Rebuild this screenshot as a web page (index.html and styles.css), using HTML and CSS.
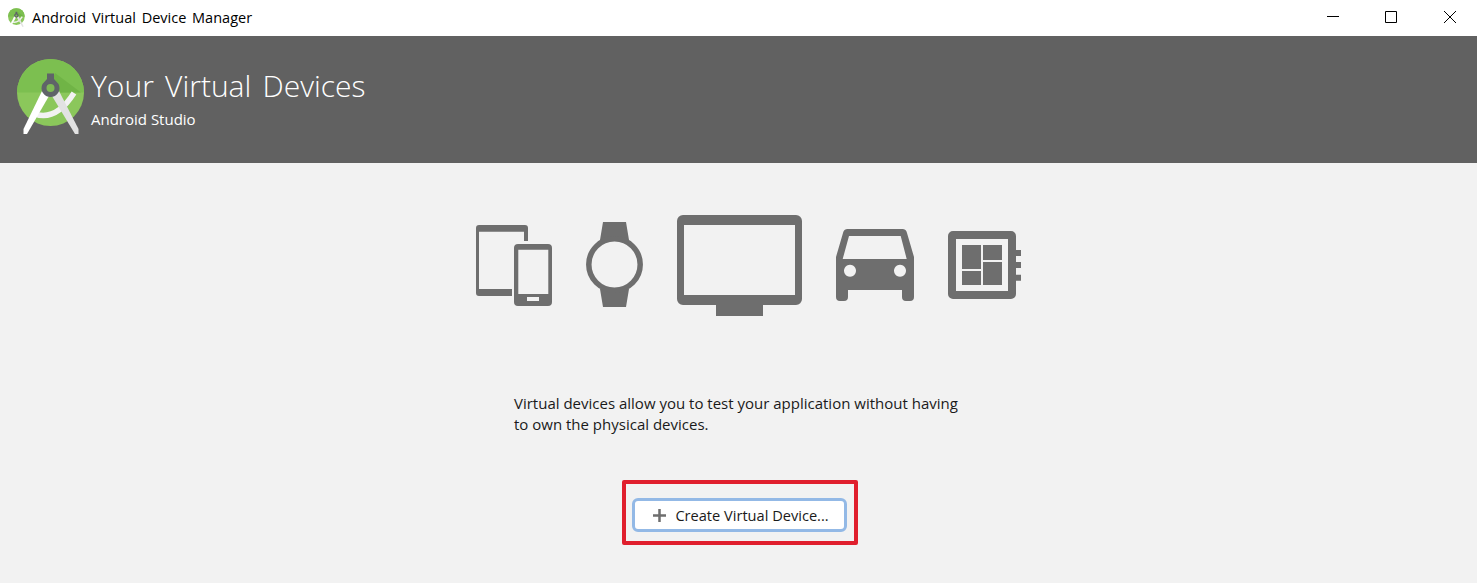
FILE: index.html
```html
<!DOCTYPE html>
<html lang="en">
<head>
    <meta charset="UTF-8">
    <title>Android Virtual Device Manager</title>
    <link rel="stylesheet" href="styles.css">
</head>
<body>
    <svg class="defs" width="0" height="0">
        <symbol id="studioLogo" viewBox="0 0 68 75">
            <circle cx="33.5" cy="33.5" r="33.5" fill="#8bc75b"/>
            <path d="M0 33.5a33.5 33.5 0 0 1 67 0z" fill="#7cbf50"/>
            <path d="M38 14 64 33.500H30z" fill="#70b446"/>
            <path d="M15 54Q38 64 57 34" fill="none" stroke="#f2f2f2" stroke-width="5.500"/>
            <path d="M25 32 32 37 10 75 6.500 75 6.500 70z" fill="#fff"/>
            <path d="M42 32 35 37 58 75 61.500 75 61.500 70z" fill="#e2e2e2"/>
            <path d="M30 14.500H37V20L41.500 25A9 9 0 1 1 25.500 25L30 20z" fill="#5f6368"/>
            <circle cx="33.500" cy="29" r="4" fill="#7fba55"/>
        </symbol>
    </svg>

    <div class="titlebar">
        <svg class="app-icon"><use href="#studioLogo"/></svg>
        <span class="window-title">Android Virtual Device Manager</span>
        <div class="window-buttons">
            <svg width="12" height="12" viewBox="0 0 12 12"><path d="M0 5.500H12" stroke="#000"/></svg>
            <svg width="12" height="12" viewBox="0 0 12 12"><path d="M.5.500H11.500V11.500H.5z" fill="none" stroke="#000"/></svg>
            <svg class="close-icon" width="12" height="12" viewBox="0 0 12 12"><path d="M0 0 12 12M12 0 0 12" stroke="#000"/></svg>
        </div>
    </div>

    <header class="banner">
        <svg class="banner-logo"><use href="#studioLogo"/></svg>
        <div class="banner-text">
            <h1>Your Virtual Devices</h1>
            <p>Android Studio</p>
        </div>
    </header>

    <main class="content">
        <div class="device-icons">
            <!-- phone / tablet -->
            <svg width="76" height="81" viewBox="0 0 76 81">
                <path d="M3 0H49a3 3 0 0 1 3 3V16H48V6.700H3V64H36V71H3a3 3 0 0 1-3-3V3a3 3 0 0 1 3-3z"/>
                <path fill-rule="evenodd" d="M42 19H72a4 4 0 0 1 4 4V77a4 4 0 0 1-4 4H42a4 4 0 0 1-4-4V23a4 4 0 0 1 4-4zM42.300 24.700V69H72.300V24.700zM51 72V76H63V72z"/>
            </svg>
            <!-- watch -->
            <svg class="watch" width="57" height="85" viewBox="0 0 57 85">
                <path d="M17 0H40L43 18H14zM14 67H43L40 85H17z"/>
                <circle class="hole" cx="28.500" cy="42.500" r="25.700"/>
            </svg>
            <!-- tv -->
            <svg width="125" height="101" viewBox="0 0 125 101">
                <path fill-rule="evenodd" d="M6 0H119a6 6 0 0 1 6 6V84a6 6 0 0 1-6 6H86V101H39V90H6a6 6 0 0 1-6-6V6a6 6 0 0 1 6-6zM7 10V80H118V10z"/>
            </svg>
            <!-- car -->
            <svg class="car" width="78" height="72" viewBox="0 0 78 72">
                <path fill-rule="evenodd" d="M12 0H66a5 5 0 0 1 5 4L78 28V68a4 4 0 0 1-4 4H70a4 4 0 0 1-4-4V61H12V68a4 4 0 0 1-4 4H4a4 4 0 0 1-4-4V28L7 4a5 5 0 0 1 5-4zM13 7 6.700 30H70.700L64.700 7zM14 35.700a6 6 0 1 0 .01 0zM64 35.700a6 6 0 1 0 .01 0z"/>
            </svg>
            <!-- things board -->
            <svg class="board" width="73" height="68" viewBox="0 0 73 68">
                <path fill-rule="evenodd" d="M5 0H63a5 5 0 0 1 5 5V63a5 5 0 0 1-5 5H5a5 5 0 0 1-5-5V5a5 5 0 0 1 5-5zM8 8V60H60V8z"/>
                <path d="M14 14H33V38H14zM35 14H54V29H35zM35 31H54V54H35zM14 40H33V54H14zM68 19H73V25H68zM68 31H73V37H68zM68 43.700H73V49.700H68z"/>
            </svg>
        </div>

        <p class="description">Virtual devices allow you to test your application without having to own the physical devices.</p>

        <div class="highlight">
            <button class="create-button">
                <svg width="13" height="13" viewBox="0 0 13 13"><path d="M6.500 0V13M0 6.500H13" stroke="#6e6e6e" stroke-width="2.500"/></svg>
                Create Virtual Device...
            </button>
        </div>
    </main>
</body>
</html>
```

FILE: styles.css
```css
* {
    box-sizing: border-box;
}

html, body {
    height: 100%;
}

body {
    margin: 0;
    display: flex;
    flex-direction: column;
    overflow: hidden;
    font-family: "Open Sans", "Noto Sans", Arial, sans-serif;
    background-color: #f2f2f2;
    color: #1a1a1a;
}

.defs {
    position: absolute;
}

/* window title bar */
.titlebar {
    display: flex;
    align-items: center;
    height: 36px;
    padding: 0 0 2px 8px;
    background-color: #fff;
}

.app-icon {
    width: 17px;
    height: 19px;
    margin-right: 7px;
}

.window-title {
    font-size: 14.5px;
    word-spacing: 2px;
    color: #000;
}

.window-buttons {
    display: flex;
    gap: 46px;
    margin-left: auto;
    padding-right: 21px;
}

.close-icon {
    margin-left: 1px;
}

/* grey header */
.banner {
    display: flex;
    height: 127px;
    padding: 23px 0 0 17px;
    background-color: #616161;
    color: #fff;
}

.banner-logo {
    width: 68px;
    height: 75px;
    margin-right: 6px;
}

.banner-text h1 {
    margin: 3px 0 0 0;
    font-size: 30px;
    font-weight: 300;
    word-spacing: 3.5px;
    line-height: 47px;
}

.banner-text p {
    margin: 0;
    font-size: 15px;
    line-height: 20px;
}

/* main area */
.content {
    flex: 1;
    display: flex;
    flex-direction: column;
    align-items: center;
}

.device-icons {
    display: flex;
    align-items: center;
    gap: 34px;
    margin-top: 52px;
    padding-left: 20px;
}

.device-icons svg {
    fill: #6e6e6e;
}

.device-icons .watch {
    margin-bottom: 2px;
}

.device-icons .car,
.device-icons .board {
    margin-bottom: 1px;
}

.device-icons .hole {
    fill: #f2f2f2;
    stroke: #6e6e6e;
    stroke-width: 5.5;
}

.description {
    width: 449px;
    margin: 77px 0 0 0;
    font-size: 15px;
    line-height: 21px;
}

.highlight {
    display: flex;
    justify-content: center;
    align-items: center;
    width: 236px;
    height: 65px;
    margin: 45px 0 0 2px;
    padding-top: 5px;
    border: 4px solid #e01f2d;
    border-radius: 2px;
}

.create-button {
    display: flex;
    justify-content: center;
    align-items: center;
    gap: 9px;
    width: 215px;
    height: 34px;
    padding: 0 0 0 3px;
    border: 3px solid #93b9e6;
    border-radius: 6px;
    background-color: #fff;
    font-family: inherit;
    font-size: 14.6px;
    color: #1a1a1a;
}
```
